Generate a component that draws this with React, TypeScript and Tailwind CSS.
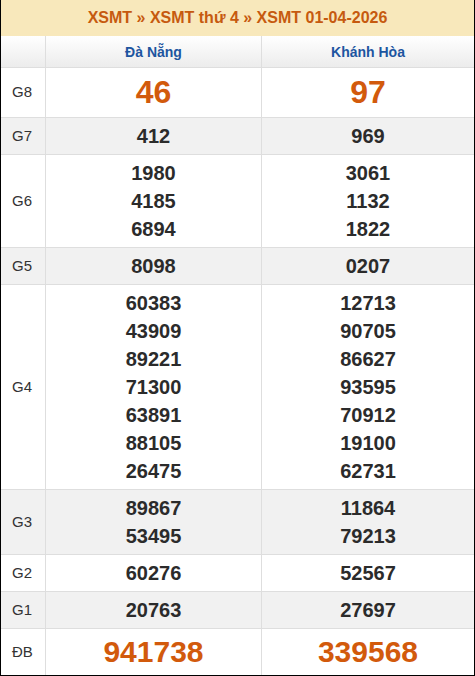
import React from "react";

type Row = { label: string; a: string[]; b: string[]; big?: "g8" | "db"; gray?: boolean };

const rows: Row[] = [
  { label: "G8", a: ["46"], b: ["97"], big: "g8" },
  { label: "G7", a: ["412"], b: ["969"], gray: true },
  { label: "G6", a: ["1980", "4185", "6894"], b: ["3061", "1132", "1822"] },
  { label: "G5", a: ["8098"], b: ["0207"], gray: true },
  {
    label: "G4",
    a: ["60383", "43909", "89221", "71300", "63891", "88105", "26475"],
    b: ["12713", "90705", "86627", "93595", "70912", "19100", "62731"],
  },
  { label: "G3", a: ["89867", "53495"], b: ["11864", "79213"], gray: true },
  { label: "G2", a: ["60276"], b: ["52567"] },
  { label: "G1", a: ["20763"], b: ["27697"], gray: true },
  { label: "ĐB", a: ["941738"], b: ["339568"], big: "db" },
];

function Nums({ list, big }: { list: string[]; big?: "g8" | "db" }) {
  if (big === "g8") {
    return <div className="text-[32px] leading-[41px] font-bold text-[#d25a0c]">{list[0]}</div>;
  }
  if (big === "db") {
    return <div className="text-[30px] leading-[38px] font-bold text-[#d25a0c]">{list[0]}</div>;
  }
  return (
    <div className="flex flex-col">
      {list.map((n, i) => (
        <div key={i} className="text-[20px] leading-[28px] font-bold text-[#2b2b2b]">
          {n}
        </div>
      ))}
    </div>
  );
}

export default function App() {
  return (
    <div
      className="w-[475px] h-[676px] border-x border-b border-black bg-white overflow-hidden"
      style={{ fontFamily: '"Liberation Sans", Arial, sans-serif' }}
    >
      <div className="h-[36px] bg-[#f8e8bb] flex items-center justify-center text-[16px] font-bold text-[#c65a0f]">
        XSMT » XSMT thứ 4 » XSMT 01-04-2026
      </div>
      <div className="flex h-[32px] border-b border-[#dedede] bg-gradient-to-b from-white to-[#ececec]">
        <div className="w-[45px] border-r border-[#dedede]" />
        <div className="w-[216px] border-r border-[#dedede] pt-[2px] flex items-center justify-center text-[14px] font-bold text-[#1d55a0]">
          Đà Nẵng
        </div>
        <div className="flex-1 pt-[2px] flex items-center justify-center text-[14px] font-bold text-[#1d55a0]">
          Khánh Hòa
        </div>
      </div>
      {rows.map((r) => (
        <div
          key={r.label}
          className={`flex border-b border-[#dedede] last:border-b-0 ${r.gray ? "bg-[#f1f1f1]" : "bg-white"}`}
        >
          <div className="w-[45px] border-r border-[#dedede] flex items-center pl-[11px] text-[15px] text-[#333]">
            {r.label}
          </div>
          <div className="w-[216px] border-r border-[#dedede] py-[4px] flex items-center justify-center text-center">
            <Nums list={r.a} big={r.big} />
          </div>
          <div className="flex-1 py-[4px] flex items-center justify-center text-center">
            <Nums list={r.b} big={r.big} />
          </div>
        </div>
      ))}
    </div>
  );
}
